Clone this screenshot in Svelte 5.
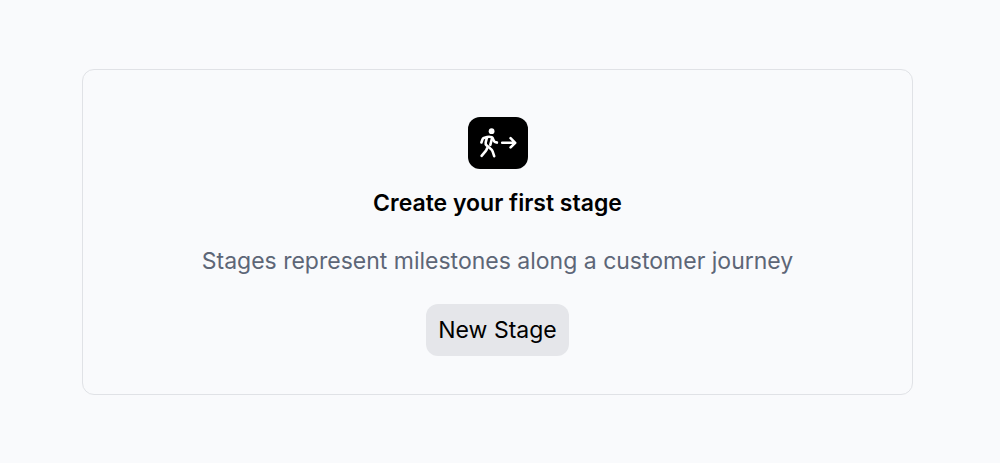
<script>
  let {
    title = "Create your first stage",
    description = "Stages represent milestones along a customer journey",
    actionLabel = "New Stage",
    onCreate = () => {},
  } = $props();
</script>

<main class="page">
  <section class="empty-state" aria-labelledby="empty-title">
    <div class="icon-tile">
      <svg viewBox="0 0 60 52" width="60" height="52" aria-hidden="true">
        <circle cx="23.6" cy="14.2" r="2.9" fill="currentColor" />
        <g fill="none" stroke="currentColor" stroke-width="2.6" stroke-linecap="round" stroke-linejoin="round">
          <path d="M13.4 25.5l1.2-3.4q.3-.8 1.2-1.1l3.4-1q2.2-.6 4 .1 1.2.4 1.6 1.3l.9 2.2q.4 1 1.4 1.4l1.8.6" />
          <path d="M18.8 21l-1.1 4.5q-.4 1.8 1 3l3.9 3.3q1.5 1.2 2 2.6l1.6 4.8" />
          <path d="M24 21.5l-1.7 6.3" />
          <path d="M19 31.4q-.4 1.6-1.4 2.8l-4 4.6" />
          <path d="M34.2 25.8h12.6M42.6 21.2l4.6 4.6-4.6 4.6" />
        </g>
      </svg>
    </div>
    <h1 id="empty-title" class="title">{title}</h1>
    <p class="description">{description}</p>
    <button type="button" class="action" onclick={() => onCreate()}>{actionLabel}</button>
  </section>
</main>

<style>
  :global(body) {
    margin: 0;
    background: #f9fafc;
  }

  .page {
    box-sizing: border-box;
    min-height: 100vh;
    padding: 69px 87px 68px 82px;
    font-family: Inter, "Liberation Sans", sans-serif;
  }

  .empty-state {
    display: flex;
    flex-direction: column;
    align-items: center;
    padding: 47px 24px 38px;
    border: 1px solid #e0e2e6;
    border-radius: 12px;
    text-align: center;
  }

  .icon-tile {
    display: flex;
    border-radius: 12px;
    color: #fff;
    background: #000;
  }

  .title {
    margin: 16px 0 0;
    font-size: 23px;
    font-weight: 600;
    line-height: 36px;
    color: #000;
  }

  .description {
    margin: 22px 0 0;
    font-size: 23px;
    line-height: 36px;
    color: #5d6677;
  }

  .action {
    margin: 25px 0 0;
    padding: 8px 12px;
    border: 0;
    border-radius: 12px;
    font: inherit;
    font-size: 23px;
    line-height: 36px;
    color: #000;
    background: #e5e6ea;
    cursor: pointer;
  }
</style>
